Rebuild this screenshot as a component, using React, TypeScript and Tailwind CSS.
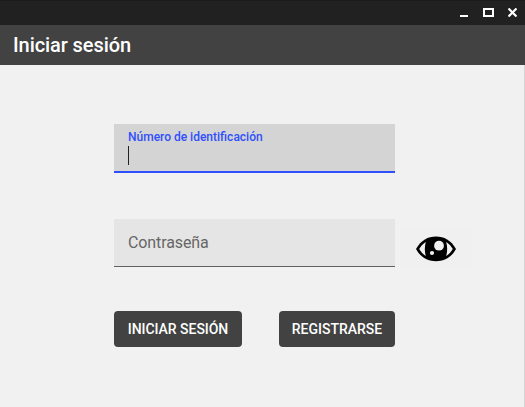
import React from 'react';

function TitleBar() {
  return (
    <div className="flex h-[25px] justify-end border-t border-[#1b1b1b] bg-[#212121] pt-[7px] pr-2">
      <div className="flex items-end gap-[15px] h-[9px]">
        <button aria-label="Minimizar" className="h-0.5 w-2 bg-white" />
        <button aria-label="Maximizar" className="h-[9px] w-[11px] border-2 border-white" />
        <button aria-label="Cerrar" className="-ml-px h-[9px] w-[9px]">
          <svg viewBox="0 0 9 9" className="block h-[9px] w-[9px]" stroke="white" strokeWidth="2.2">
            <path d="M.5 .5 8.5 8.5M8.5 .5.5 8.5" />
          </svg>
        </button>
      </div>
    </div>
  );
}

function EyeIcon() {
  return (
    <svg viewBox="0 0 40 26" className="block h-[26px] w-10">
      <path d="M0 13C5 4 12 .4 20 .4S35 4 40 13C35 22 28 25.2 20 25.2S5 22 0 13Z" fill="#000" />
      <path d="M3.2 13C4.9 10 7 7.8 9.8 6C8.5 10.5 8.5 15.5 9.8 20C7 18.2 4.9 16 3.2 13ZM36.8 13C35.1 10 33 7.8 30.2 6C31.5 10.5 31.5 15.5 30.2 20C33 18.2 35.1 16 36.8 13Z" fill="#f0f0f0" />
      <circle cx="23" cy="9.7" r="4.9" fill="#f0f0f0" />
      <circle cx="16" cy="17" r="2.1" fill="#f0f0f0" />
    </svg>
  );
}

export default function App() {
  return (
    <div className="flex h-screen w-full flex-col overflow-hidden bg-[#f1f1f1] font-['Roboto',sans-serif]">
      <TitleBar />
      <header className="flex h-10 items-center bg-[#424242] pl-[13px]">
        <h1 className="text-[20px] leading-6 font-medium tracking-[-0.08px] text-white">Iniciar sesión</h1>
      </header>
      <main className="flex-1 border-r border-[#d5d5d5] pt-[59px] pl-[114px]">
        <div className="h-[49px] w-[281px] border-b-2 border-[#304ffe] bg-[#d4d4d4] pt-[5px] pl-3.5">
          <div className="text-[12px] leading-4 font-medium whitespace-nowrap text-[#304ffe]">Número de identificación</div>
          <div className="mt-px h-[19px] w-px bg-[#212121]" />
        </div>
        <div className="mt-[46px] flex items-start">
          <div className="flex h-12 w-[281px] items-center border-b border-[#616161] bg-[#e5e5e5] pl-3.5">
            <span className="text-[16px] leading-5 tracking-[-0.1px] text-[#666666]">Contraseña</span>
          </div>
          <button aria-label="Mostrar contraseña" className="mt-[9px] ml-1.5 flex h-10 w-[71px] bg-[#f0f0f0] pt-2 pl-[15px]">
            <EyeIcon />
          </button>
        </div>
        <div className="mt-[43px] flex gap-[37px]">
          <button className="h-9 w-32 rounded bg-[#424242] text-[14px] font-medium tracking-[-0.04px] whitespace-nowrap text-white">INICIAR SESIÓN</button>
          <button className="h-9 w-[116px] rounded bg-[#424242] text-[14px] font-medium whitespace-nowrap text-white">REGISTRARSE</button>
        </div>
      </main>
    </div>
  );
}
